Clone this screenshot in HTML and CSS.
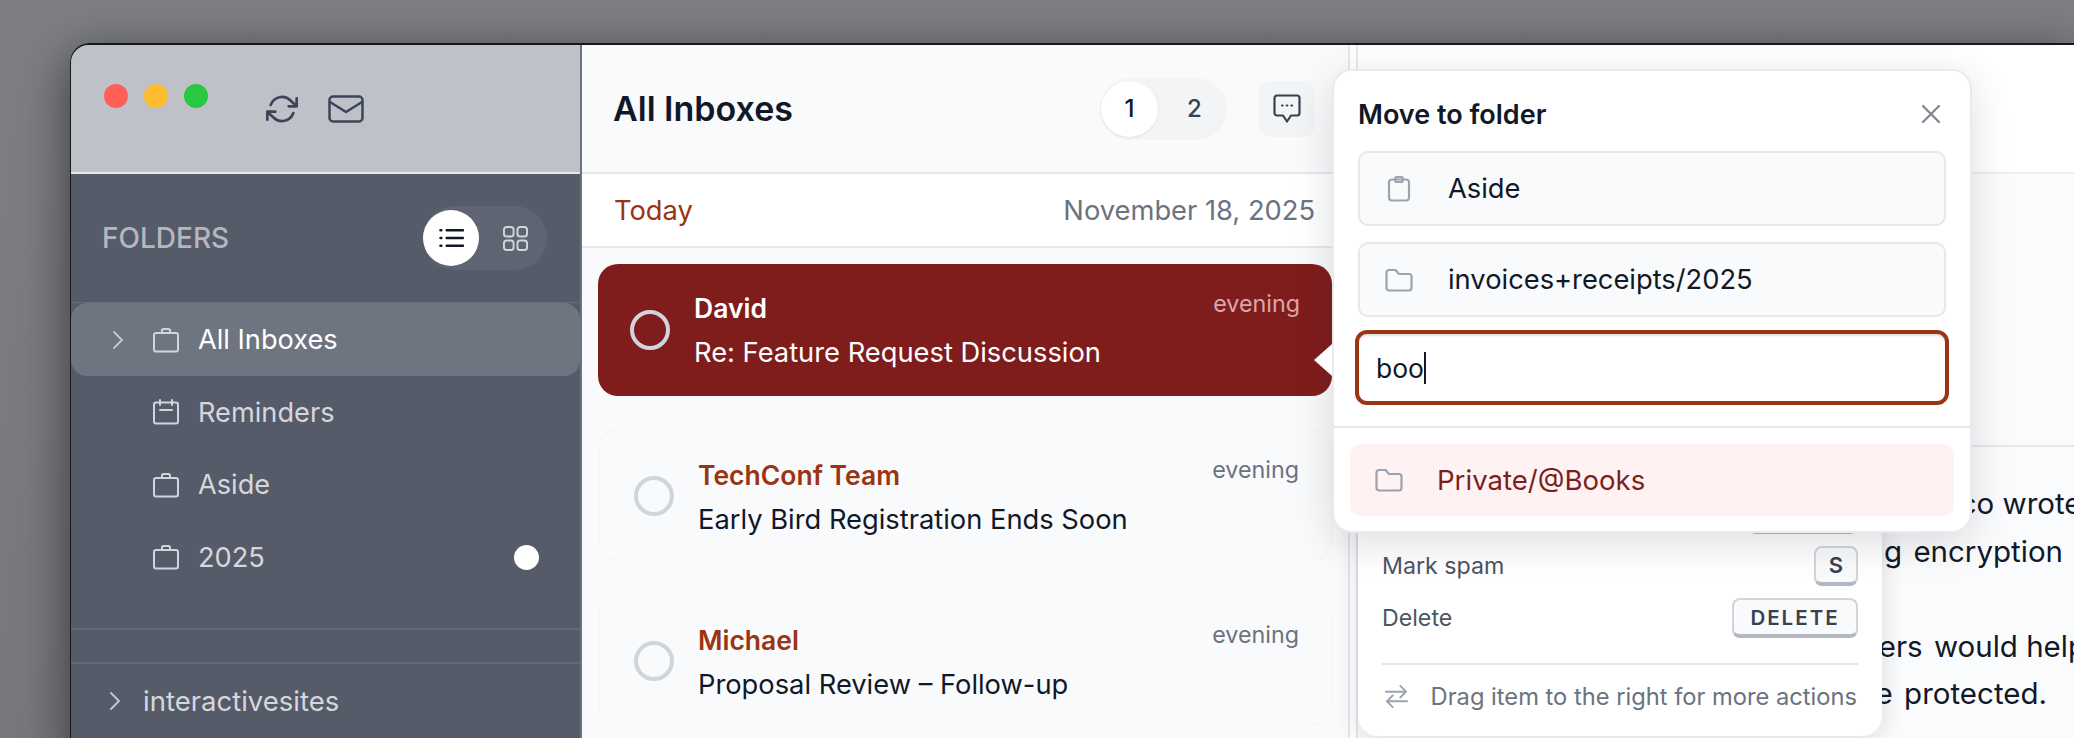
FILE: index.html
```html
<!DOCTYPE html>
<html lang="en">
<head>
<meta charset="utf-8">
<title>All Inboxes</title>
<link rel="stylesheet" href="styles.css">
</head>
<body>
<div class="window">
  <aside class="sidebar">
    <div class="side-top">
      <div class="lights"><span class="light red"></span><span class="light yellow"></span><span class="light green"></span></div>
      <svg class="tb-icon refresh" viewBox="0 0 24 24"><path d="M23 4v6h-6M1 20v-6h6M3.5 9a9 9 0 0 1 14.9-3.4L23 10M1 14l4.6 4.4A9 9 0 0 0 20.5 15"/></svg>
      <svg class="tb-icon mail" viewBox="0 0 36 28"><rect x="1.5" y="1.5" width="33" height="25" rx="3.5"/><path d="M2 7l16 10 16-10"/></svg>
    </div>
    <div class="folders-head">
      <span class="folders-title">FOLDERS</span>
      <div class="view-toggle">
        <span class="view-btn active"><svg viewBox="0 0 26 22"><path d="M8 3h17M8 11h17M8 19h17"/><path class="dots" d="M1.5 3h1M1.5 11h1M1.5 19h1"/></svg></span>
        <span class="view-btn"><svg viewBox="0 0 26 26"><rect x="1" y="1" width="10" height="10" rx="3"/><rect x="15" y="1" width="10" height="10" rx="3"/><rect x="1" y="15" width="10" height="10" rx="3"/><rect x="15" y="15" width="10" height="10" rx="3"/></svg></span>
      </div>
    </div>
    <div class="folder-row selected">
      <svg class="chev" viewBox="0 0 10 18"><path d="M1 1l8 8-8 8"/></svg>
      <svg class="f-icon" viewBox="0 0 26 26"><path d="M9 6V3.5C9 2.5 9.800 2 10.500 2h5c.8 0 1.500.5 1.500 1.500V6"/><rect x="1" y="6" width="24" height="18.500" rx="2"/></svg>
      <span>All Inboxes</span>
    </div>
    <div class="folder-row">
      <span class="chev-space"></span>
      <svg class="f-icon" viewBox="0 0 26 26"><rect x="1" y="3.500" width="24" height="21" rx="2"/><path d="M7 1v5M19 1v5M7 11h12"/></svg>
      <span>Reminders</span>
    </div>
    <div class="folder-row">
      <span class="chev-space"></span>
      <svg class="f-icon" viewBox="0 0 26 26"><path d="M9 6V3.500C9 2.500 9.800 2 10.500 2h5c.8 0 1.500.5 1.500 1.500V6"/><rect x="1" y="6" width="24" height="18.500" rx="2"/></svg>
      <span>Aside</span>
    </div>
    <div class="folder-row">
      <span class="chev-space"></span>
      <svg class="f-icon" viewBox="0 0 26 26"><path d="M9 6V3.500C9 2.500 9.800 2 10.500 2h5c.8 0 1.500.5 1.500 1.500V6"/><rect x="1" y="6" width="24" height="18.500" rx="2"/></svg>
      <span>2025</span>
      <span class="unread-dot"></span>
    </div>
    <div class="account-gap"></div>
    <div class="account-row">
      <svg class="chev" viewBox="0 0 10 18"><path d="M1 1l8 8-8 8"/></svg>
      <span>interactivesites</span>
    </div>
  </aside>

  <section class="list">
    <header class="list-head">
      <h1>All Inboxes</h1>
      <div class="pager"><span class="page active">1</span><span class="page">2</span></div>
      <span class="chat-btn"><svg viewBox="0 0 28 30"><path d="M4 1.500h20a2.500 2.500 0 0 1 2.500 2.500v15a2.500 2.500 0 0 1-2.500 2.500h-6l-4 6-4-6H4A2.500 2.500 0 0 1 1.500 19V4A2.500 2.500 0 0 1 4 1.500z"/><path d="M9 11.500h.6M13.700 11.500h.6M18.400 11.500h.6"/></svg></span>
    </header>
    <div class="date-bar"><span class="today">Today</span><span class="date">November 18, 2025</span></div>
    <div class="messages">
      <article class="msg current">
        <span class="ring"></span>
        <div class="msg-text"><div class="sender">David</div><div class="subject">Re: Feature Request Discussion</div></div>
        <span class="time">evening</span>
      </article>
      <article class="msg">
        <span class="ring"></span>
        <div class="msg-text"><div class="sender">TechConf Team</div><div class="subject">Early Bird Registration Ends Soon</div></div>
        <span class="time">evening</span>
      </article>
      <article class="msg">
        <span class="ring"></span>
        <div class="msg-text"><div class="sender">Michael</div><div class="subject">Proposal Review – Follow-up</div></div>
        <span class="time">evening</span>
      </article>
    </div>
  </section>

  <section class="detail">
    <div class="detail-top"></div>
    <div class="detail-meta"></div>
    <div class="detail-body">
      <div class="line l1">On Tuesday, Marco wrote:</div>
      <div class="line l2"><span class="gap">We are considering</span> encryption</div>
      <div class="line l3">&nbsp;</div>
      <div class="line l4"><span class="gap">Our customers</span> would help</div>
      <div class="line l5"><span class="gap">keep the</span> protected.</div>
    </div>
  </section>

  <div class="actions">
    <div class="action"><span>Archive</span><kbd class="key wide">ENTER</kbd></div>
    <div class="action"><span>Mark spam</span><kbd class="key single">S</kbd></div>
    <div class="action"><span>Delete</span><kbd class="key">DELETE</kbd></div>
    <div class="hint">
      <svg viewBox="0 0 26 26"><path d="M2 8h21M17 2l6 6-6 6M24 18H3M9 12l-6 6 6 6"/></svg>
      <span>Drag item to the right for more actions</span>
    </div>
  </div>

  <div class="popover">
    <span class="notch"></span>
    <div class="pop-head">
      <span class="pop-title">Move to folder</span>
      <svg class="close" viewBox="0 0 20 20"><path d="M2 2l16 16M18 2L2 18"/></svg>
    </div>
    <div class="pick">
      <svg class="pick-icon" viewBox="0 0 24 26"><rect x="2" y="3.500" width="20" height="21" rx="3"/><rect x="8" y="1" width="8" height="5" rx="2"/></svg>
      <span>Aside</span>
    </div>
    <div class="pick">
      <svg class="pick-icon" viewBox="0 0 28 24"><path d="M1.500 4.500A2.500 2.500 0 0 1 4 2h6.500l3.500 4h10a2.500 2.500 0 0 1 2.500 2.500V20a2.500 2.500 0 0 1-2.500 2.500H4A2.500 2.500 0 0 1 1.500 20z"/></svg>
      <span>invoices+receipts/2025</span>
    </div>
    <div class="search"><span>boo</span><span class="caret"></span></div>
    <div class="pop-rule"></div>
    <div class="result">
      <svg class="pick-icon" viewBox="0 0 28 24"><path d="M1.500 4.500A2.500 2.500 0 0 1 4 2h6.500l3.500 4h10a2.500 2.500 0 0 1 2.500 2.500V20a2.500 2.500 0 0 1-2.500 2.500H4A2.500 2.500 0 0 1 1.500 20z"/></svg>
      <span>Private/@Books</span>
    </div>
  </div>
</div>
</body>
</html>
```
FILE: styles.css
```css
* { box-sizing: border-box; }
html, body { margin: 0; height: 100%; }
body {
  width: 2074px;
  height: 738px;
  overflow: hidden;
  padding: 43px 0 0 70px;
  background: linear-gradient(180deg, #7e7f84 0%, #77787d 100%);
  font-family: "Inter", "Liberation Sans", sans-serif;
  color: #111827;
}
svg { display: block; fill: none; stroke: currentColor; stroke-linecap: round; stroke-linejoin: round; }

.window {
  position: relative;
  display: flex;
  width: 2004px;
  height: 720px;
  border-top: 2px solid #17181b;
  border-left: 1px solid #17181b;
  border-top-left-radius: 20px;
  background: #fff;
  box-shadow: 0 12px 50px rgba(0, 0, 0, .55);
}

/* sidebar */
.sidebar { flex: 0 0 509px; background: #555b69; border-top-left-radius: 18px; overflow: hidden; }
.side-top {
  display: flex;
  align-items: center;
  height: 129px;
  padding-left: 33px;
  background: #bfc1c9;
  border-bottom: 2px solid #e5e7eb;
}
.lights { display: flex; gap: 16px; margin-bottom: 25px; }
.light { width: 24px; height: 24px; border-radius: 50%; }
.red { background: #ff5f57; }
.yellow { background: #febc2e; }
.green { background: #28c840; }
.tb-icon { color: #3b4557; stroke-width: 2; }
.refresh { width: 32px; height: 32px; margin: 0 0 0 58px; }
.mail { width: 36px; height: 28px; margin-left: 30px; stroke-width: 2.500; }

.folders-head {
  display: flex;
  align-items: center;
  justify-content: space-between;
  height: 129px;
  padding: 0 33px 0 31px;
  border-bottom: 1px solid #666c79;
}
.folders-title { font-size: 28px; font-weight: 500; color: #b4b7bf; }
.view-toggle {
  display: flex;
  align-items: center;
  width: 124px;
  height: 64px;
  padding: 4px 0 4px 0;
  border-radius: 32px;
  background: #5e6471;
}
.view-btn { display: flex; align-items: center; justify-content: center; width: 56px; height: 56px; border-radius: 50%; color: #d1d5db; }
.view-btn + .view-btn { margin-left: 8px; }
.view-btn svg { width: 25px; height: 25px; stroke-width: 2; }
.view-btn.active { background: #fff; color: #111827; }
.view-btn.active svg { height: 22px; stroke-width: 2.500; }

.folder-row {
  display: flex;
  align-items: center;
  height: 72.500px;
  padding: 0 42px;
  font-size: 27.200px;
  color: #d5d7dc;
}
.folder-row.selected { height: 73px; border-radius: 16px; background: #6e7480; color: #fff; }
.chev { flex: none; width: 10px; height: 18px; color: #c4c7ce; stroke-width: 1.800; }
.chev-space { flex: none; width: 10px; }
.f-icon { flex: none; width: 26px; height: 26px; margin: 0 19px 0 30px; color: #d1d5db; stroke-width: 2; }
.unread-dot { width: 25px; height: 25px; margin-left: auto; margin-right: -1px; border-radius: 50%; background: #fff; }
.account-gap { height: 36px; margin-top: 34px; border-top: 2px solid #636977; border-bottom: 2px solid #636977; }
.account-row {
  display: flex;
  align-items: center;
  gap: 23px;
  height: 74px;
  padding-left: 39px;
  font-size: 27.500px;
  color: #d5d7dc;
}

/* message list */
.list {
  flex: 0 0 770px;
  position: relative;
  background: #f9fafb;
  border-left: 2px solid #6b7280;
  border-right: 2px solid #e5e7eb;
}
.list-head {
  display: flex;
  align-items: center;
  height: 129px;
  padding: 0 33px 0 31px;
  border-bottom: 2px solid #e5e7eb;
}
.list-head h1 { margin: 0 auto 0 0; font-size: 34px; font-weight: 600; color: #111827; }
.pager { display: flex; align-items: center; width: 127px; height: 62px; padding-left: 1px; border-radius: 31px; background: #f3f4f6; }
.page { display: flex; align-items: center; justify-content: center; width: 57px; height: 56px; border-radius: 50%; font-size: 24px; font-weight: 500; color: #374151; }
.page + .page { margin-left: 8px; }
.page.active { background: #fff; color: #111827; box-shadow: 0 1px 3px rgba(0, 0, 0, .08); }
.chat-btn { display: flex; align-items: center; justify-content: center; width: 56px; height: 56px; margin-left: 32px; border-radius: 12px; background: #f3f4f6; color: #374151; }
.chat-btn svg { width: 28px; height: 30px; stroke-width: 2.200; }
.date-bar {
  display: flex;
  align-items: center;
  justify-content: space-between;
  height: 74px;
  padding: 0 33px 0 32px;
  background: #fff;
  border-bottom: 2px solid #e5e7eb;
  font-size: 27.300px;
}
.today { color: #9a3412; }
.date { color: #6b7280; }

.messages { display: flex; flex-direction: column; gap: 33px; padding: 16px 16px 0; }
.msg {
  display: flex;
  align-items: flex-start;
  height: 132px;
  padding: 28px 31px 0 34px;
  border: 2px solid #f6f7f8;
  border-radius: 20px;
}
.msg.current { padding: 28px 32px 0 32px; border: 0; background: #7f1d1d; }
.ring { flex: none; width: 40px; height: 40px; margin-top: 17px; margin-right: 24px; border: 4px solid #d1d5db; border-radius: 50%; }
.msg.current .ring { margin-top: 18px; }
.msg-text { flex: 1; }
.sender { font-size: 26.500px; font-weight: 600; line-height: 32px; color: #9a3412; }
.subject { margin-top: 13px; font-size: 27.300px; line-height: 32px; color: #111827; }
.current .sender, .current .subject { color: #fff; }
.time { margin-top: -5px; font-size: 23.300px; line-height: 32px; color: #6b7280; }
.current .time { margin-top: -4px; color: #d9a8a8; }

/* detail */
.detail { flex: 1; min-width: 0; overflow: hidden; background: #fff; border-left: 2px solid #e5e7eb; margin-left: 6px; }
.detail-top { height: 129px; border-bottom: 2px solid #eceef1; }
.detail-meta { height: 273px; background: #fbfbfc; border-bottom: 2px solid #e5e7eb; }
.detail-body { padding-top: 33px; background: #fafbfc; height: 400px; font-size: 29.500px; line-height: 47.500px; }
.line { text-align: right; white-space: nowrap; }
.gap { margin-right: 3px; }
.l1 { margin-right: -16px; }
.l2 { margin-right: 11px; }
.l4 { margin-right: -12px; }
.l5 { margin-right: 27px; }

/* action card */
.actions {
  position: absolute;
  left: 1287px;
  top: 395px;
  width: 524px;
  height: 296px;
  padding: 48px 24px 0;
  border-radius: 0 0 20px 20px;
  background: #fff;
  box-shadow: 0 4px 24px rgba(17, 24, 39, .14);
  font-size: 23.200px;
  color: #4b5563;
}
.action { display: flex; align-items: center; justify-content: space-between; height: 52px; }
.key {
  display: flex;
  align-items: center;
  justify-content: center;
  width: 126px;
  height: 40px;
  border: 2px solid #d1d5db;
  border-bottom: 4px solid #b3b8c2;
  border-radius: 8px;
  background: #f9fafb;
  font-family: "Inter", sans-serif;
  font-size: 20.500px;
  font-weight: 600;
  letter-spacing: 2px;
  color: #374151;
}
.key.wide { width: 110px; }
.key.single { width: 44px; letter-spacing: 0; font-size: 22px; }
.hint {
  display: flex;
  align-items: center;
  justify-content: space-between;
  height: 65px;
  margin-top: 19px;
  padding: 0 1px 0 2px;
  border-top: 2px solid #e5e7eb;
  font-size: 23.700px;
  color: #6b7280;
}
.hint svg { width: 25px; height: 25px; color: #9ca3af; stroke-width: 2; }

/* popover */
.popover {
  position: absolute;
  left: 1261px;
  top: 24px;
  width: 640px;
  height: 464px;
  padding: 0 24px;
  border: 2px solid #e8eaed;
  border-radius: 20px;
  background: #fff;
  box-shadow: 0 10px 40px rgba(17, 24, 39, .14);
}
.notch {
  position: absolute;
  left: -20px;
  top: 273px;
  width: 0;
  height: 0;
  border-top: 16px solid transparent;
  border-bottom: 16px solid transparent;
  border-right: 18px solid #fff;
}
.pop-head { display: flex; align-items: center; justify-content: space-between; height: 80px; padding: 6px 5px 0 0; }
.pop-title { font-size: 27px; font-weight: 600; color: #111827; }
.close { width: 20px; height: 20px; color: #7d8592; stroke-width: 2.200; }
.pick {
  display: flex;
  align-items: center;
  height: 75px;
  margin-bottom: 16px;
  padding-left: 25px;
  border: 2px solid #e5e7eb;
  border-radius: 10px;
  background: #f9fafb;
  font-size: 27.300px;
}
.pick-icon { flex: none; width: 28px; height: 26px; margin-right: 35px; color: #9ca3af; stroke-width: 2.200; }
.result .pick-icon { margin-right: 34px; }
.search {
  display: flex;
  align-items: center;
  height: 75px;
  margin: -3px -3px 0;
  padding-left: 17px;
  border: 4px solid #9a3412;
  border-radius: 12px;
  box-shadow: inset 0 2px 2px rgba(0, 0, 0, .12);
  background: #fff;
  font-size: 26.500px;
}
.caret { width: 1.500px; height: 32px; background: #111827; }
.pop-rule { height: 2px; margin: 21px -24px 16px; background: #e5e7eb; }
.result {
  display: flex;
  align-items: center;
  height: 72px;
  margin: 0 -8px;
  padding-left: 25px;
  border-radius: 10px;
  background: #fef2f2;
  font-size: 27.600px;
  color: #7f1d1d;
}
```
